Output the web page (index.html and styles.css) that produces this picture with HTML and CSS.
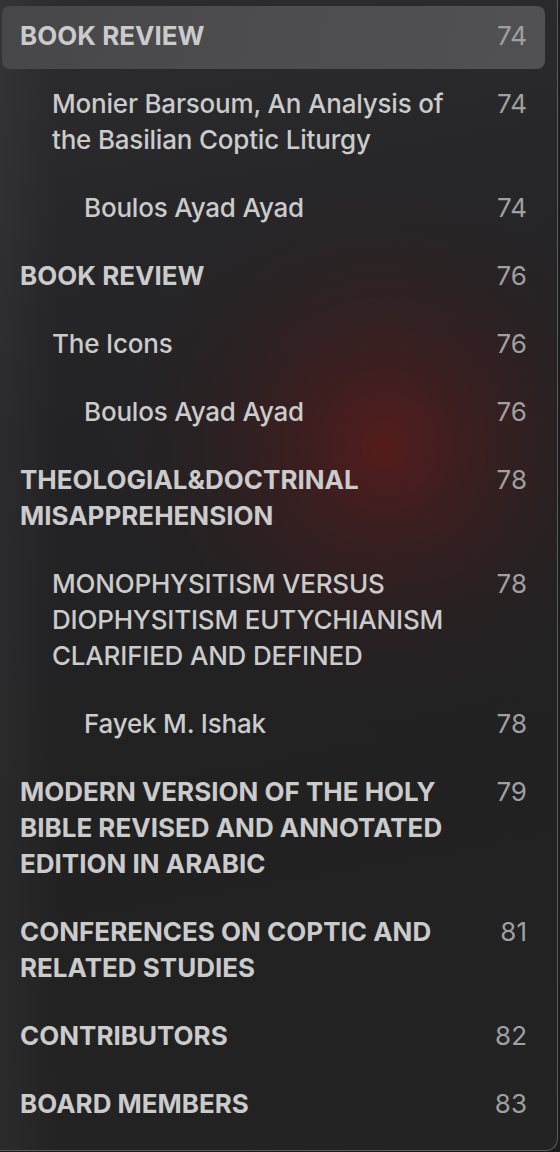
FILE: index.html
```html
<!DOCTYPE html>
<html lang="en">
<head>
  <meta charset="UTF-8">
  <meta name="viewport" content="width=device-width, initial-scale=1.0">
  <title>Contents</title>
  <link rel="stylesheet" href="styles.css">
</head>
<body>
  <nav class="toc">
    <ul class="toc-list">
      <li class="toc-item level-0 active"><span class="toc-title">BOOK REVIEW</span><span class="toc-page">74</span></li>
      <li class="toc-item level-1"><span class="toc-title">Monier Barsoum, An Analysis of the Basilian Coptic Liturgy</span><span class="toc-page">74</span></li>
      <li class="toc-item level-2"><span class="toc-title">Boulos Ayad Ayad</span><span class="toc-page">74</span></li>
      <li class="toc-item level-0"><span class="toc-title">BOOK REVIEW</span><span class="toc-page">76</span></li>
      <li class="toc-item level-1"><span class="toc-title">The Icons</span><span class="toc-page">76</span></li>
      <li class="toc-item level-2"><span class="toc-title">Boulos Ayad Ayad</span><span class="toc-page">76</span></li>
      <li class="toc-item level-0"><span class="toc-title">THEOLOGIAL&amp;DOCTRINAL MISAPPREHENSION</span><span class="toc-page">78</span></li>
      <li class="toc-item level-1"><span class="toc-title">MONOPHYSITISM VERSUS DIOPHYSITISM EUTYCHIANISM CLARIFIED AND DEFINED</span><span class="toc-page">78</span></li>
      <li class="toc-item level-2"><span class="toc-title">Fayek M. Ishak</span><span class="toc-page">78</span></li>
      <li class="toc-item level-0"><span class="toc-title">MODERN VERSION OF THE HOLY BIBLE REVISED AND ANNOTATED EDITION IN ARABIC</span><span class="toc-page">79</span></li>
      <li class="toc-item level-0"><span class="toc-title">CONFERENCES ON COPTIC AND RELATED STUDIES</span><span class="toc-page">81</span></li>
      <li class="toc-item level-0"><span class="toc-title">CONTRIBUTORS</span><span class="toc-page">82</span></li>
      <li class="toc-item level-0"><span class="toc-title">BOARD MEMBERS</span><span class="toc-page">83</span></li>
    </ul>
  </nav>
</body>
</html>
```

FILE: styles.css
```css
/* Base */
* {
  margin: 0;
  padding: 0;
  box-sizing: border-box;
}

html {
  background: #1c1c1d;
}

body {
  font-family: Inter, "Noto Sans", sans-serif;
  color: #cbcbcb;
  -webkit-font-smoothing: antialiased;
}

/* Sidebar panel */
.toc {
  width: 558px;
  min-height: 1151px;
  border-right: 1px solid #5c5c5e;
  border-bottom: 1px solid #5c5c5e;
  border-bottom-right-radius: 12px;
  background:
    radial-gradient(ellipse 300px 300px at 385px 445px, rgba(98, 26, 26, 0.78) 0%, rgba(82, 26, 26, 0.48) 30%, rgba(62, 27, 27, 0.22) 60%, rgba(45, 30, 30, 0.06) 85%, rgba(40, 30, 30, 0) 100%),
    linear-gradient(90deg, rgba(255, 255, 255, 0.04) 0, rgba(255, 255, 255, 0) 60px),
    linear-gradient(170deg, #2c2c2e 0%, #232325 35%, #212122 70%, #232324 100%);
}

.toc-list {
  list-style: none;
  padding-top: 2px;
}

/* Rows */
.toc-item {
  display: grid;
  grid-template-columns: 1fr auto;
  column-gap: 20px;
  padding: 16px 30px 16px 20px;
  font-size: 26px;
  line-height: 36px;
}

.toc-item.level-1 {
  padding-left: 52px;
}

.toc-item.level-2 {
  padding-left: 84px;
}

.toc-item.active {
  margin: 4px 12px 1px 2px;
  padding: 12px 18px 15px 18px;
  border-radius: 8px;
  background: linear-gradient(100deg, #474749 0%, #4d4d4f 50%, #515153 100%);
}

.toc-title {
  font-weight: 500;
  letter-spacing: -0.2px;
}

.level-0 .toc-title {
  font-weight: 700;
  letter-spacing: 0;
}

.toc-page {
  color: #a0a0a2;
  font-weight: 400;
  text-align: right;
}
```
